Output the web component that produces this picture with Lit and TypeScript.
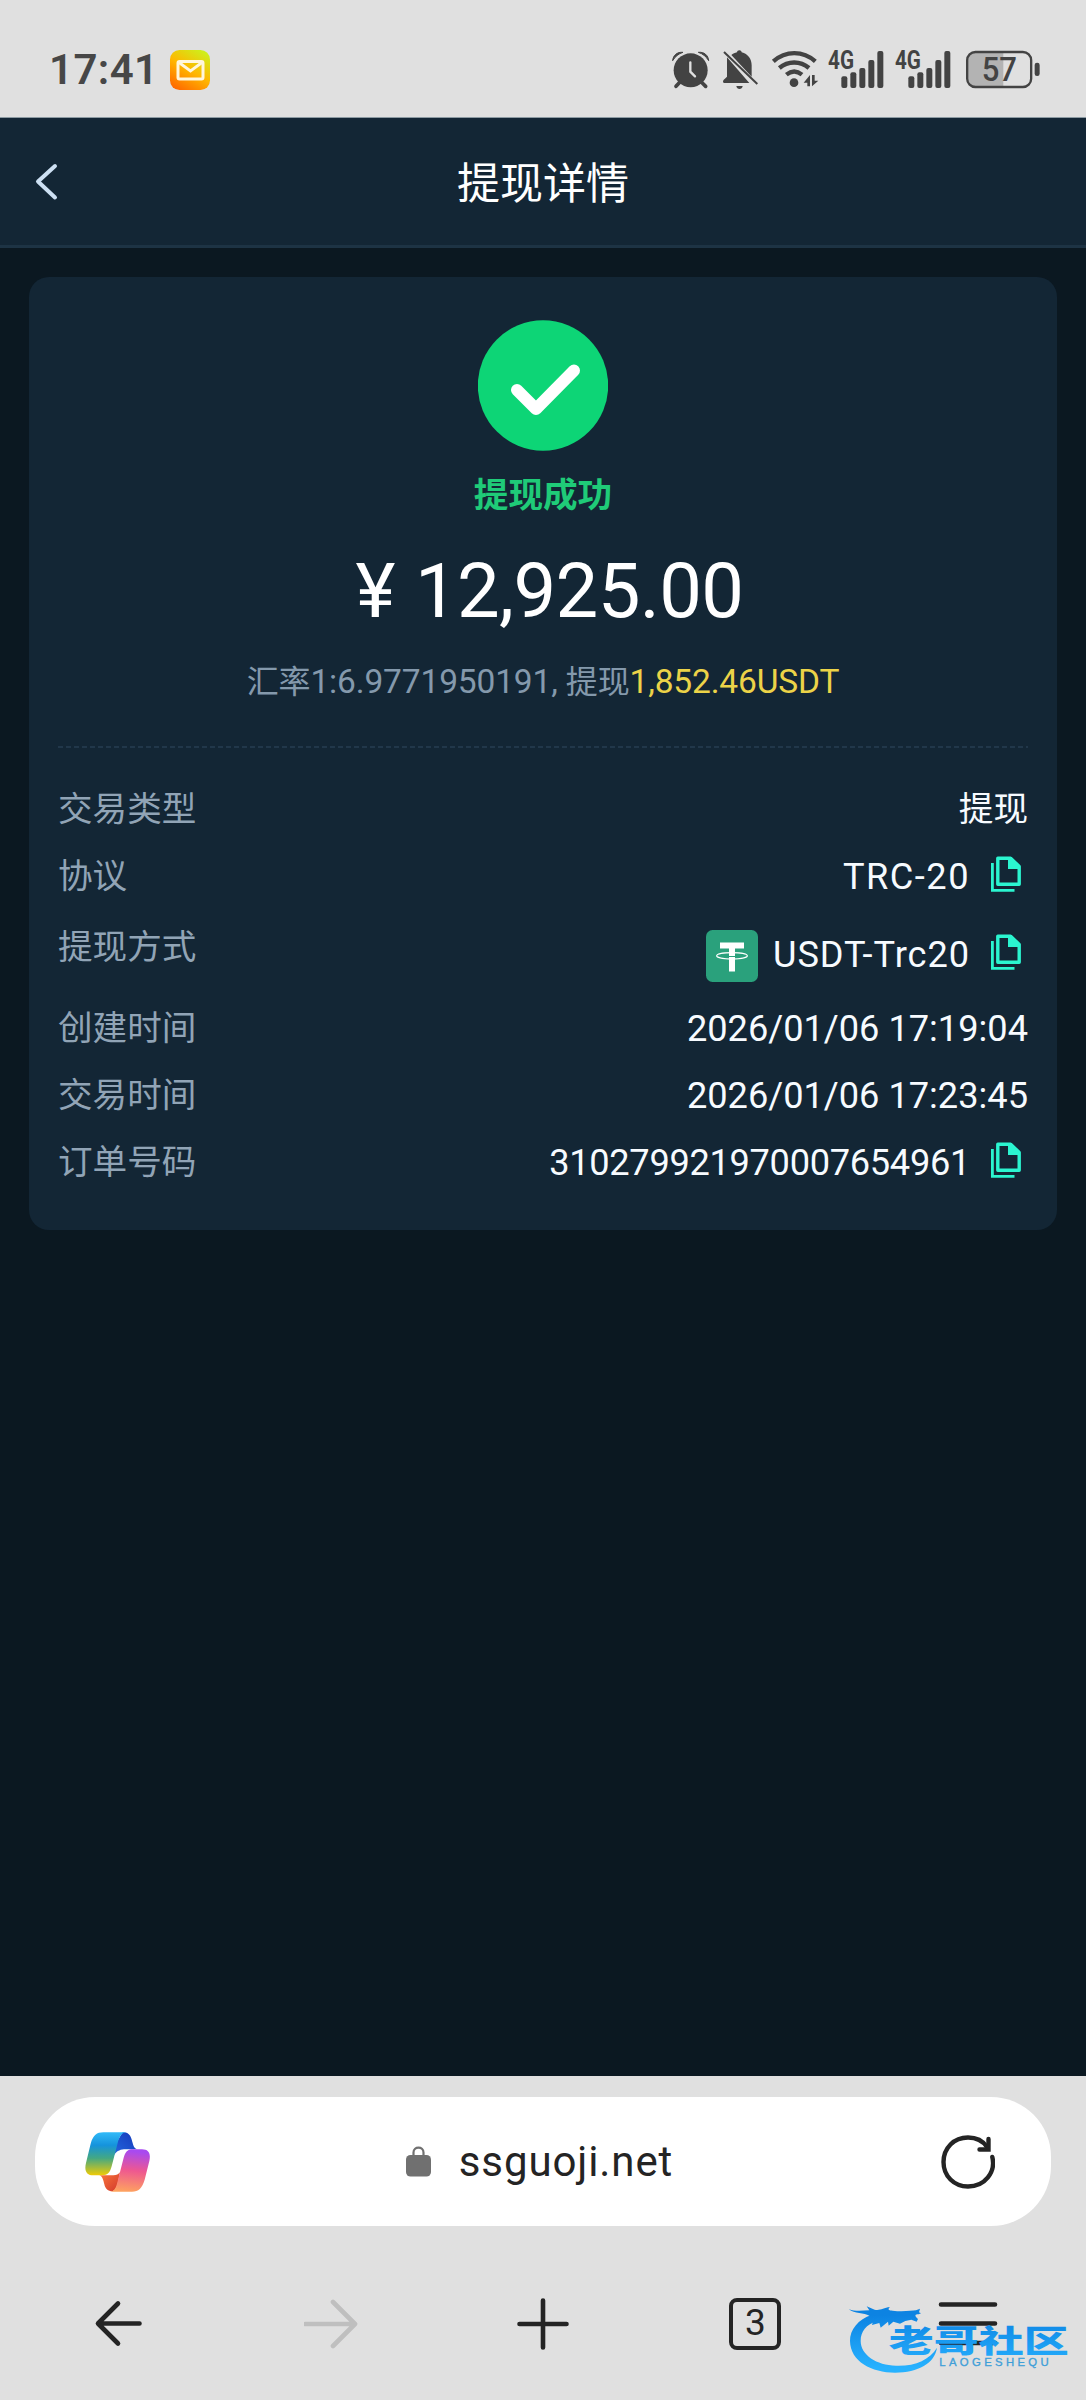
import {LitElement, css, html, svg, nothing} from 'lit';
import {customElement, property} from 'lit/decorators.js';

@customElement('copy-icon')
export class CopyIcon extends LitElement {

    static styles = css`
        :host {
            display: block;
            width: 30px;
            height: 36px;
        }

        svg {
            display: block;
        }
    `;

    render() {
        return html`
            <svg width="30" height="36" viewBox="0 0 30 36" fill="none" stroke="#2bf5d0" stroke-width="2.8">
                <path d="M1.4 7V34.3H23.5"/>
                <path d="M6.8 2.2H19.5L28.2 10.5V28.2H6.8Z" stroke-width="3.4" stroke-linejoin="round"/>
                <path d="M17 1V13H29V9.5L20.5 1Z" fill="#2bf5d0" stroke="none"/>
            </svg>
        `;
    }
}

@customElement('detail-row')
export class DetailRow extends LitElement {

    @property() label = '';
    @property() value = '';
    @property({type: Boolean}) copy = false;
    @property({type: Boolean, reflect: true}) token = false;

    static styles = css`
        :host {
            display: flex;
            justify-content: space-between;
            min-height: 67px;
            font-family: Roboto, "Noto Sans CJK SC", sans-serif;
        }

        .label {
            padding-top: 8px;
            height: 51px;
            line-height: 51px;
            font-size: 34.6px;
            letter-spacing: 0;
            color: #91a4b6;
        }

        .value {
            display: flex;
            align-items: center;
            font-size: 36.2px;
            line-height: 51px;
            color: #f7fbff;
        }

        .value .cjk {
            font-size: 34.6px;
        }

        :host([token]) {
            min-height: 85px;
        }

        :host([token]) .label {
            padding-top: 12px;
        }

        :host([token]) .value {
            padding-top: 4px;
        }

        .token {
            display: block;
            margin: 2px 15px 0 0;
        }

        copy-icon {
            margin: -5px 7px 0 21px;
        }
    `;

    render() {
        return html`
            <div class="label">${this.label}</div>
            <div class="value">
                ${this.token ? html`
                    <svg class="token" width="52" height="52" viewBox="0 0 52 52">
                        <rect width="52" height="52" rx="6.5" fill="#2aa17c"/>
                        <path d="M14 12.5H38V18.5H29V41.5H23V18.5H14Z" fill="#fff"/>
                        <ellipse cx="26" cy="25.8" rx="15.3" ry="3.2" fill="none" stroke="#fff" stroke-width="1.2"/>
                        <path d="M23 26.5H29" stroke="#2aa17c" stroke-width="1"/>
                    </svg>` : nothing}
                <span class=${/[\u4e00-\u9fa5]/.test(this.value) ? 'cjk' : 'latin'}>${this.value}</span>
                ${this.copy ? html`<copy-icon></copy-icon>` : nothing}
            </div>
        `;
    }
}

@customElement('status-bar')
export class StatusBar extends LitElement {

    static styles = css`
        :host {
            display: flex;
            justify-content: space-between;
            box-sizing: border-box;
            height: 118px;
            padding: 50px 46px 0 49px;
            background: #e0e0e0;
            border-bottom: 1px solid #8d9ba3;
            font-family: Roboto, sans-serif;
        }

        .left, .right {
            display: flex;
            height: 40px;
        }

        .time {
            width: 121px;
            font-size: 42px;
            font-weight: 600;
            line-height: 40px;
            letter-spacing: 0.4px;
            color: #474747;
        }

        .right {
            gap: 12px;
        }

        svg {
            display: block;
            overflow: visible;
        }

        text {
            font-family: Roboto, sans-serif;
        }
    `;

    // icons share one 3x grid, 120 units tall
    icon(x: number, width: number, content: unknown) {
        return html`
            <svg width=${width / 3} height="40" viewBox="${x} 60 ${width} 120" fill="#434343">${content}</svg>
        `;
    }

    signal(x: number) {
        return this.icon(x, x === 556 ? 165 : 172, svg`
            <text x=${x} y="116" font-size="75" font-weight="700" textLength="78" lengthAdjust="spacingAndGlyphs">4G</text>
            ${[[40, 139], [67, 127], [94, 114], [121, 90], [148, 63]].map(([dx, y]) => svg`
                <rect x=${x + dx} y=${y} width="18" height=${174 - y} rx="6"/>
            `)}
        `);
    }

    render() {
        return html`
            <div class="left">
                <div class="time">17:41</div>
                <svg width="40" height="40" viewBox="0 0 40 40">
                    <defs>
                        <linearGradient id="mail" x1="0.2" y1="1" x2="0.8" y2="0">
                            <stop offset="0" stop-color="#ff6a00"/>
                            <stop offset="0.5" stop-color="#ffb700"/>
                            <stop offset="1" stop-color="#cdf01c"/>
                        </linearGradient>
                    </defs>
                    <rect width="40" height="40" rx="9.5" fill="url(#mail)"/>
                    <rect x="8" y="11.5" width="25" height="17.5" rx="1.5" fill="none" stroke="#fff6dc" stroke-width="3"/>
                    <path d="M9 12.5L20.5 21L32 12.5" fill="none" stroke="#fff6dc" stroke-width="2.8"/>
                </svg>
            </div>
            <div class="right">
                ${this.icon(88, 114, svg`
                    <circle cx="144" cy="121" r="51"/>
                    <path d="M90 92C91 76 104 65 121 67C108 71 97 80 90 92ZM198 92C197 76 184 65 167 67C180 71 191 80 198 92Z"
                        stroke="#434343" stroke-width="3" stroke-linejoin="round"/>
                    <path d="M112 156L100 169M176 156L189 169" stroke="#434343" stroke-width="11" stroke-linecap="round"/>
                    <path d="M143 97V125L157 139" fill="none" stroke="#e0e0e0" stroke-width="7" stroke-linecap="round"/>
                `)}
                ${this.icon(238, 110, svg`
                    <path d="M253 82L320 159H246C239 159 240 151 246 147L253 140Z"/>
                    <path d="M266 75C271 71 277 69 283 67C283 59 297 59 297 67C316 72 327 87 327 106V140Z"/>
                    <path d="M281 168H300C299 180 282 180 281 168Z"/>
                    <path d="M244 66L344 162" stroke="#434343" stroke-width="6"/>
                `)}
                ${this.icon(384, 136, svg`
                    <g fill="none" stroke="#434343" stroke-width="13">
                        <path d="M391 94C428 61 480 61 517 94"/>
                        <path d="M409 114C435 92 472 92 498 114"/>
                        <path d="M430 134C445 122 462 122 477 134"/>
                    </g>
                    <circle cx="453" cy="158" r="13"/>
                    <path d="M501 135V169H493V158H482ZM507 135V169L526 152H515V135Z"/>
                `)}
                ${this.signal(556)}
                ${this.signal(757)}
                ${this.icon(965, 226, svg`
                    <path d="M992 68H1080V168H992Q972 168 972 148V88Q972 68 992 68Z" fill="#b3b3b3"/>
                    <rect x="971.5" y="66" width="192" height="105" rx="25" fill="none" stroke="#434343" stroke-width="7"/>
                    <rect x="1174" y="98" width="15" height="40" rx="7"/>
                    <text x="1068" y="153" font-size="100" font-weight="500" text-anchor="middle"
                        textLength="106" lengthAdjust="spacingAndGlyphs">57</text>
                `)}
            </div>
        `;
    }
}

@customElement('browser-bar')
export class BrowserBar extends LitElement {

    static styles = css`
        :host {
            display: block;
            position: relative;
            box-sizing: border-box;
            height: 324px;
            padding: 21px 35px 0;
            background: #e0e0e0;
            font-family: Roboto, sans-serif;
        }

        svg {
            display: block;
        }

        .address {
            display: flex;
            align-items: center;
            justify-content: space-between;
            box-sizing: border-box;
            height: 129px;
            padding: 0 56px 0 50px;
            border-radius: 60px;
            background: #fff;
        }

        .host {
            display: flex;
            align-items: center;
            gap: 28px;
            margin-right: 12px;
            font-size: 42px;
            letter-spacing: 0.9px;
            color: #242424;
        }

        .nav {
            display: grid;
            grid-template-columns: repeat(5, 1fr);
            justify-items: center;
            align-items: center;
            width: 1062px;
            margin-left: -23px;
            height: 196px;
        }

        .nav svg {
            fill: none;
            stroke: #242424;
            stroke-width: 4.6;
            stroke-linecap: round;
            stroke-linejoin: round;
        }

        .nav .disabled {
            stroke: #bfbfbf;
        }

        .tabs {
            display: flex;
            align-items: center;
            justify-content: center;
            box-sizing: border-box;
            width: 52px;
            height: 52px;
            padding-bottom: 4px;
            border: 4.5px solid #242424;
            border-radius: 8px;
            font-size: 37px;
            font-weight: 400;
            line-height: 37px;
            color: #242424;
        }

        .watermark {
            position: absolute;
            right: 16px;
            bottom: 20px;
        }
    `;

    render() {
        return html`
            <div class="address">
                <svg width="65" height="60" viewBox="21 27 195 180" preserveAspectRatio="none">
                    <defs>
                        <linearGradient id="cool" x1="0" y1="0" x2="0" y2="1">
                            <stop offset="0" stop-color="#31baf8"/>
                            <stop offset="0.3" stop-color="#1593dc"/>
                            <stop offset="0.6" stop-color="#43a884"/>
                            <stop offset="1" stop-color="#f0cb05"/>
                        </linearGradient>
                        <linearGradient id="warm" x1="0.1" y1="0" x2="0" y2="1">
                            <stop offset="0" stop-color="#a84af0"/>
                            <stop offset="0.45" stop-color="#ee5890"/>
                            <stop offset="1" stop-color="#ffa85c"/>
                        </linearGradient>
                        <linearGradient id="navy" x1="1" y1="0" x2="0" y2="1">
                            <stop offset="0" stop-color="#1537b8"/>
                            <stop offset="1" stop-color="#2368e0"/>
                        </linearGradient>
                        <linearGradient id="ember" x1="0" y1="0" x2="1" y2="1">
                            <stop offset="0" stop-color="#fb7a3c"/>
                            <stop offset="1" stop-color="#d3382c"/>
                        </linearGradient>
                    </defs>
                    <path d="M64 157C74 160 76 172 79 184C82 198 90 205 103 205C113 202 116 194 120 178L126 148C121 154 116 157 106 157Z" fill="url(#ember)"/>
                    <path d="M134 28C156 26 160 45 164 60C167 73 172 79 182 79H138C124 80 114 86 106 100L114 60Z" fill="url(#navy)"/>
                    <path d="M76 28H144C130 30 124 42 119 60L101 130C96 148 90 157 72 157H46C26 157 18 144 24 120L38 62C46 36 56 28 76 28Z" fill="url(#cool)"/>
                    <path d="M160 79H192C212 79 219 92 214 114L200 170C192 196 182 206 162 206H98C108 204 113 196 117 182L137 104C142 88 148 80 160 79Z" fill="url(#warm)"/>
                </svg>
                <div class="host">
                    <svg width="25" height="31" viewBox="0 0 25 31">
                        <rect y="9" width="25" height="21.5" rx="4.5" fill="#707070"/>
                        <path d="M7.5 10V6.5C7.5 0 17.5 0 17.5 6.5V10" fill="none" stroke="#707070" stroke-width="2.2"/>
                    </svg>
                    <span>ssguoji.net</span>
                </div>
                <svg width="54" height="54" viewBox="0 0 54 54" fill="none" stroke="#242424" stroke-width="4.4" stroke-linecap="round">
                    <path d="M51.3 22C55 37 44 51.5 27 51.5C13 51.5 2.5 41 2.5 27C2.5 13 13 2.5 27 2.5C35 2.5 42 6 46 12"/>
                    <path d="M47.5 4V14.5H38.5" stroke-linejoin="miter"/>
                </svg>
            </div>
            <div class="nav">
                <svg width="54" height="54" viewBox="0 0 54 54"><path d="M48.5 26.5H7M27 6.5L7 26.5L27 46.5"/></svg>
                <svg class="disabled" width="54" height="54" viewBox="0 0 54 54"><path d="M1.5 27H50M29 5L51 27L29 49"/></svg>
                <svg width="54" height="54" viewBox="0 0 54 54"><path d="M3.5 27H50.5M27 3.5V50.5"/></svg>
                <div class="tabs">3</div>
                <svg width="60" height="54" viewBox="0 0 60 54"><path d="M3 7.5H57M3 26.5H57M3 46H57"/></svg>
            </div>
            <svg class="watermark" width="224" height="76" viewBox="18 27 672 228">
                <defs>
                    <linearGradient id="wave" gradientUnits="userSpaceOnUse" x1="0" y1="60" x2="0" y2="220">
                        <stop offset="0" stop-color="#0d83e2"/>
                        <stop offset="1" stop-color="#27b2ff"/>
                    </linearGradient>
                </defs>
                <g fill="url(#wave)">
                    <path d="M95 60C55 72 29 105 30 138C31 200 95 233 165 233C235 232 284 205 291 158C268 195 225 214 168 212C110 211 62 180 62 138C62 110 78 88 112 78Z"/>
                    <path d="M26 42C45 50 65 47 88 46L80 34L104 44C120 48 130 38 150 36C142 43 146 47 158 47C190 52 215 46 228 46L240 41L237 52L243 55L236 58C225 58 222 62 234 72L230 80L214 74L196 78L180 86L160 80L146 92L144 80L122 98L118 84L96 90L100 76L84 82L88 62C72 52 44 58 26 42Z"/>
                    <text x="146" y="172" font-size="91" font-weight="900" font-family="Noto Sans CJK SC, sans-serif"
                        textLength="540" lengthAdjust="spacingAndGlyphs">老哥社区</text>
                </g>
                <text x="298" y="214" font-size="34" fill="#3f9fd8" stroke="#3f9fd8" stroke-width="1"
                    font-family="Liberation Sans, sans-serif" textLength="328">LAOGESHEQU</text>
            </svg>
        `;
    }
}

@customElement('app-root')
export class AppRoot extends LitElement {

    static styles = css`
        :host {
            display: flex;
            flex-direction: column;
            width: 1086px;
            height: 2400px;
            overflow: hidden;
            background: #0b1821;
            font-family: Roboto, "Noto Sans CJK SC", sans-serif;
        }

        header {
            display: grid;
            grid-template-columns: 1fr auto 1fr;
            align-items: center;
            box-sizing: border-box;
            height: 130px;
            padding: 0 35px;
            background: #132635;
            border-bottom: 3px solid #1d3344;
        }

        h1 {
            margin: 0;
            padding-bottom: 4px;
            font-size: 43px;
            font-weight: 400;
            color: #fff;
        }

        main {
            flex: 1;
            padding: 29px;
        }

        .card {
            box-sizing: border-box;
            height: 953px;
            padding: 43px 29px 0;
            border-radius: 20px;
            background: #132635;
        }

        .summary {
            display: flex;
            flex-direction: column;
            align-items: center;
            height: 426px;
        }

        .status {
            margin-top: 19px;
            font-size: 34.6px;
            font-weight: 700;
            line-height: 51px;
            color: #1fcb78;
        }

        .amount {
            margin: 25px 0 0 13px;
            font-size: 76px;
            line-height: 90px;
            letter-spacing: -0.6px;
            color: #fff;
        }

        .yen {
            margin-right: 20px;
        }

        .rate {
            margin-top: 22px;
            font-size: 33.5px;
            line-height: 48px;
            letter-spacing: -0.15px;
            color: #8499ac;
        }

        .rate .cjk {
            font-size: 32px;
        }

        .rate em {
            font-style: normal;
            color: #ecd348;
        }

        .divider {
            height: 2px;
            background: repeating-linear-gradient(90deg, #21374a 0 5px, transparent 5px 8px);
        }

        .details {
            padding-top: 28px;
        }

        .protocol {
            letter-spacing: 1.5px;
        }

        .method {
            letter-spacing: 0.95px;
        }

        .order {
            letter-spacing: -0.3px;
        }
    `;

    render() {
        return html`
            <status-bar></status-bar>
            <header>
                <svg width="24" height="38" viewBox="0 0 24 38" fill="none" stroke="#cde0f3" stroke-width="4" stroke-linecap="round" stroke-linejoin="round">
                    <path d="M20 3L3 18.5L20 34.5"/>
                </svg>
                <h1>提现详情</h1>
            </header>
            <main>
                <section class="card">
                    <div class="summary">
                        <svg width="130" height="131" viewBox="0 0 130 131">
                            <circle cx="65" cy="65.5" r="65.2" fill="#0dd576"/>
                            <path d="M39 70L58 89L96 50.5" fill="none" stroke="#fff" stroke-width="12" stroke-linecap="round" stroke-linejoin="round"/>
                        </svg>
                        <div class="status">提现成功</div>
                        <div class="amount"><span class="yen">¥</span>12,925.00</div>
                        <div class="rate"><span class="cjk">汇率</span>1:6.9771950191, <span class="cjk">提现</span><em>1,852.46USDT</em></div>
                    </div>
                    <div class="divider"></div>
                    <div class="details">
                        <detail-row label="交易类型" value="提现"></detail-row>
                        <detail-row class="protocol" label="协议" value="TRC-20" copy></detail-row>
                        <detail-row class="method" label="提现方式" value="USDT-Trc20" copy token></detail-row>
                        <detail-row label="创建时间" value="2026/01/06 17:19:04"></detail-row>
                        <detail-row label="交易时间" value="2026/01/06 17:23:45"></detail-row>
                        <detail-row class="order" label="订单号码" value="310279921970007654961" copy></detail-row>
                    </div>
                </section>
            </main>
            <browser-bar></browser-bar>
        `;
    }
}
